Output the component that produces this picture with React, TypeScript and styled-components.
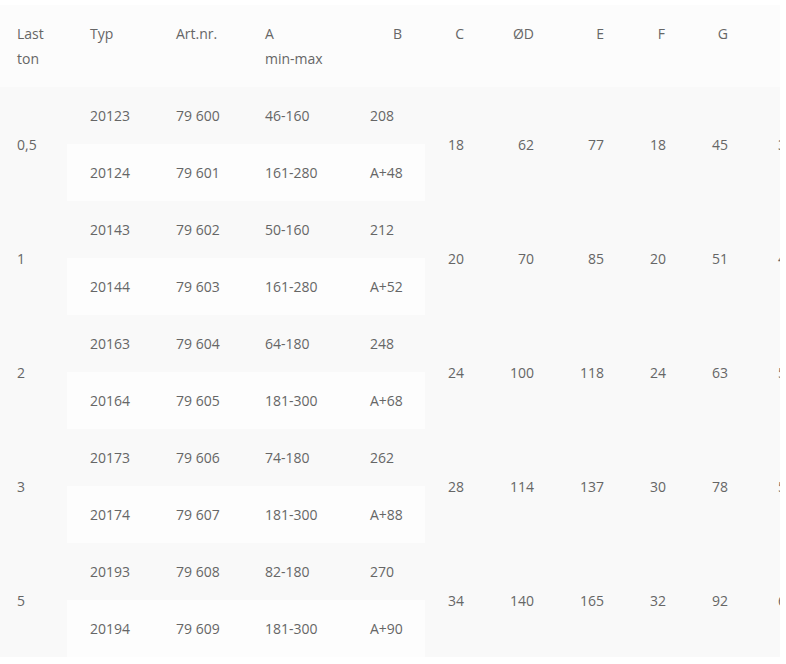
import React from "react";
import styled, { createGlobalStyle } from "styled-components";

const GlobalStyle = createGlobalStyle`
  html, body { margin: 0; padding: 0; background: #ffffff; }
  body { font-family: "Open Sans", "Noto Sans", sans-serif; }
`;

const Wrapper = styled.div`
  padding-top: 5px;
  width: 780px;
  overflow: hidden;
`;

const Table = styled.table`
  border-collapse: collapse;
  table-layout: fixed;
  width: 817px;
  font-family: "Open Sans", "Noto Sans", sans-serif;
  font-size: 14px;
  line-height: 25px;
  color: #666666;
`;

const HeadRow = styled.tr`
  background: #fcfcfc;
`;

const Th = styled.th<{ $align?: "left" | "right"; $first?: boolean }>`
  font-weight: 400;
  text-align: ${(p) => p.$align ?? "left"};
  vertical-align: top;
  padding: 16px 23px 16px ${(p) => (p.$first ? "17px" : "23px")};
  white-space: nowrap;
`;

const Row = styled.tr<{ $even?: boolean }>`
  background: ${(p) => (p.$even ? "#fdfdfd" : "#f9f9f9")};
`;

const Td = styled.td<{ $align?: "left" | "right"; $first?: boolean }>`
  text-align: ${(p) => p.$align ?? "left"};
  vertical-align: middle;
  padding: 16px 23px 16px ${(p) => (p.$first ? "17px" : "23px")};
  white-space: nowrap;
`;

type Group = {
  last: string;
  rows: [string, string, string, string][];
  c: string;
  d: string;
  e: string;
  f: string;
  g: string;
  h: string;
};

const groups: Group[] = [
  {
    last: "0,5",
    rows: [
      ["20123", "79 600", "46-160", "208"],
      ["20124", "79 601", "161-280", "A+48"],
    ],
    c: "18", d: "62", e: "77", f: "18", g: "45", h: "36",
  },
  {
    last: "1",
    rows: [
      ["20143", "79 602", "50-160", "212"],
      ["20144", "79 603", "161-280", "A+52"],
    ],
    c: "20", d: "70", e: "85", f: "20", g: "51", h: "40",
  },
  {
    last: "2",
    rows: [
      ["20163", "79 604", "64-180", "248"],
      ["20164", "79 605", "181-300", "A+68"],
    ],
    c: "24", d: "100", e: "118", f: "24", g: "63", h: "50",
  },
  {
    last: "3",
    rows: [
      ["20173", "79 606", "74-180", "262"],
      ["20174", "79 607", "181-300", "A+88"],
    ],
    c: "28", d: "114", e: "137", f: "30", g: "78", h: "56",
  },
  {
    last: "5",
    rows: [
      ["20193", "79 608", "82-180", "270"],
      ["20194", "79 609", "181-300", "A+90"],
    ],
    c: "34", d: "140", e: "165", f: "32", g: "92", h: "64",
  },
];

const widths = [67, 86, 89, 105, 78, 62, 70, 70, 61, 63, 66];

export default function App() {
  return (
    <>
      <GlobalStyle />
      <Wrapper>
        <Table>
          <colgroup>
            {widths.map((w, i) => (
              <col key={i} style={{ width: w }} />
            ))}
          </colgroup>
          <thead>
            <HeadRow>
              <Th $first>
                Last
                <br />
                ton
              </Th>
              <Th>Typ</Th>
              <Th>Art.nr.</Th>
              <Th>
                A
                <br />
                min-max
              </Th>
              <Th $align="right">B</Th>
              <Th $align="right">C</Th>
              <Th $align="right">ØD</Th>
              <Th $align="right">E</Th>
              <Th $align="right">F</Th>
              <Th $align="right">G</Th>
              <Th $align="right"></Th>
            </HeadRow>
          </thead>
          <tbody>
            {groups.map((g) => (
              <React.Fragment key={g.last}>
                <Row>
                  <Td $first rowSpan={2}>{g.last}</Td>
                  <Td>{g.rows[0][0]}</Td>
                  <Td>{g.rows[0][1]}</Td>
                  <Td>{g.rows[0][2]}</Td>
                  <Td>{g.rows[0][3]}</Td>
                  <Td $align="right" rowSpan={2}>{g.c}</Td>
                  <Td $align="right" rowSpan={2}>{g.d}</Td>
                  <Td $align="right" rowSpan={2}>{g.e}</Td>
                  <Td $align="right" rowSpan={2}>{g.f}</Td>
                  <Td $align="right" rowSpan={2}>{g.g}</Td>
                  <Td $align="right" rowSpan={2}>{g.h}</Td>
                </Row>
                <Row $even>
                  <Td>{g.rows[1][0]}</Td>
                  <Td>{g.rows[1][1]}</Td>
                  <Td>{g.rows[1][2]}</Td>
                  <Td>{g.rows[1][3]}</Td>
                </Row>
              </React.Fragment>
            ))}
          </tbody>
        </Table>
      </Wrapper>
    </>
  );
}
